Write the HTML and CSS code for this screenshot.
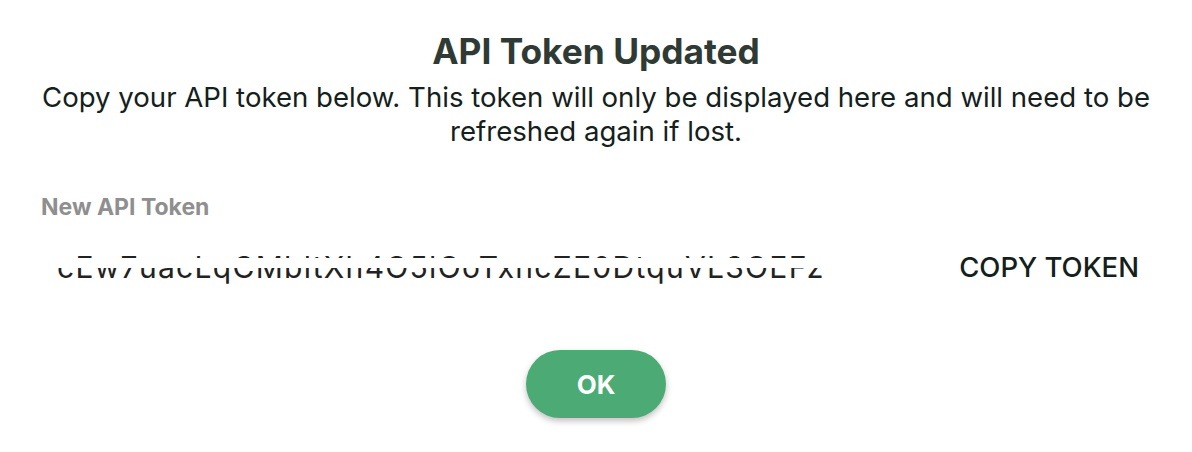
FILE: index.html
```html
<!DOCTYPE html>
<html lang="en">
<head>
<meta charset="utf-8">
<title>API Token Updated</title>
<link rel="stylesheet" href="styles.css">
</head>
<body>
<div class="dialog">
  <h1 class="title">API Token Updated</h1>
  <p class="desc">Copy your API token below. This token will only be displayed here and will need to be refreshed again if lost.</p>
  <div class="field">
    <div class="label">New API Token</div>
    <div class="token-row">
      <div class="token-box">
        <span class="token">cEw7uacLqCMbltXh4O5lOoTxncZE0DtquVL3OEFz</span>
        <span class="mask"></span>
      </div>
      <button class="copy">COPY TOKEN</button>
    </div>
  </div>
  <div class="actions">
    <button class="ok">OK</button>
  </div>
</div>
</body>
</html>
```
FILE: styles.css
```css
html, body {
  margin: 0;
  padding: 0;
  background: #ffffff;
}
body {
  font-family: Inter, "Noto Sans", "Liberation Sans", sans-serif;
  width: 1192px;
  height: 452px;
  overflow: hidden;
}
.dialog {
  padding: 30px 41px 0 41px;
  display: flex;
  flex-direction: column;
}
.title {
  margin: 0;
  text-align: center;
  font-size: 35.3px;
  line-height: 44px;
  font-weight: 700;
  color: #2f3a35;
}
.desc {
  margin: 6px 0 0 0;
  text-align: center;
  font-size: 27.6px;
  line-height: 34px;
  color: #14201b;
  font-weight: 400;
}
.field {
  margin-top: 46px;
}
.label {
  font-size: 23px;
  line-height: 26px;
  font-weight: 700;
  color: #8f8f8f;
}
.token-row {
  margin-top: 23px;
  display: flex;
  align-items: center;
  justify-content: space-between;
  height: 44px;
}
.token-box {
  position: relative;
  margin-left: 16px;
  overflow: hidden;
  height: 44px;
  box-sizing: border-box;
  padding-top: 4px;
  display: flex;
  align-items: center;
}
.token {
  font-size: 30px;
  letter-spacing: 1.3px;
  color: #222;
  white-space: nowrap;
}
.mask {
  position: absolute;
  left: 0;
  right: 0;
  top: 15px;
  height: 10px;
  background: #ffffff;
}
.copy {
  border: none;
  background: none;
  font-family: inherit;
  font-size: 27.5px;
  font-weight: 500;
  color: #14201b;
  padding: 4px 0 0 0;
  margin-right: 12px;
}
.actions {
  display: flex;
  justify-content: center;
  margin-top: 63px;
}
.ok {
  width: 140px;
  height: 68px;
  border: none;
  border-radius: 34px;
  background: #4caa74;
  color: #ffffff;
  font-family: inherit;
  font-size: 26px;
  font-weight: 700;
  box-shadow: 0 3px 6px rgba(0,0,0,0.25);
}
```
